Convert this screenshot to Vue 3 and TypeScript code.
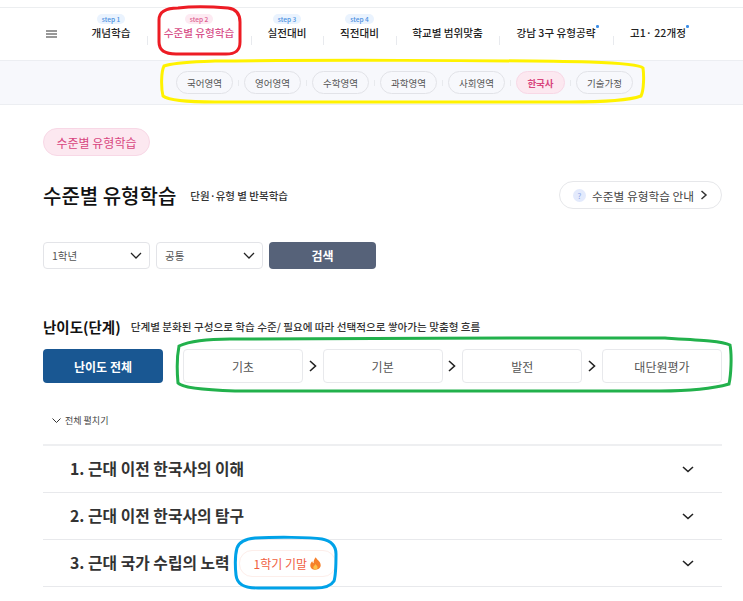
<script setup lang="ts">
interface NavItem { label: string; step?: string; active?: boolean; dot?: boolean; width: number }
const navItems: NavItem[] = [
  { label: '개념학습', step: 'step 1', width: 72 },
  { label: '수준별 유형학습', step: 'step 2', active: true, width: 104 },
  { label: '실전대비', step: 'step 3', width: 72 },
  { label: '직전대비', step: 'step 4', width: 73 },
  { label: '학교별 범위맞춤', width: 103 },
  { label: '강남 3구 유형공략', dot: true, width: 114 },
  { label: '고1· 22개정', dot: true, width: 90 }
]
const subjects = ['국어영역', '영어영역', '수학영역', '과학영역', '사회영역', '한국사', '기술가정']
const steps = ['기초', '기본', '발전', '대단원평가']
const chapters = [
  { title: '1. 근대 이전 한국사의 이해' },
  { title: '2. 근대 이전 한국사의 탐구' },
  { title: '3. 근대 국가 수립의 노력', tag: '1학기 기말' }
]
</script>

<template>
  <div class="page">
    <header class="topnav">
      <svg class="menu" width="11" height="8" viewBox="0 0 11 8"><path d="M0 1h11M0 4h11M0 7h11" stroke="#333" stroke-width="1.2" fill="none" /></svg>
      <a v-for="item in navItems" :key="item.label" class="nav-item" :class="{ active: item.active }" :style="{ width: item.width + 'px' }">
        <span v-if="item.step" class="step">{{ item.step }}</span>
        <span class="nav-label">{{ item.label }}<i v-if="item.dot" class="dot"></i></span>
      </a>
    </header>

    <nav class="subnav">
      <span v-for="s in subjects" :key="s" class="pill" :class="{ on: s === '한국사' }">{{ s }}</span>
    </nav>

    <main class="content">
      <span class="badge">수준별 유형학습</span>

      <div class="title-row">
        <h1>수준별 유형학습</h1>
        <span class="title-sub">단원·유형 별 반복학습</span>
        <button class="guide">
          <span class="q">?</span>
          수준별 유형학습 안내
          <svg width="8" height="10" viewBox="0 0 8 10"><path d="M1.5 1l4.5 4-4.5 4" stroke="#333" stroke-width="1.5" fill="none" /></svg>
        </button>
      </div>

      <div class="filters">
        <div class="select">1학년<svg width="12" height="7" viewBox="0 0 12 7"><path d="M1 1l5 5 5-5" stroke="#222" stroke-width="1.3" fill="none" /></svg></div>
        <div class="select">공통<svg width="12" height="7" viewBox="0 0 12 7"><path d="M1 1l5 5 5-5" stroke="#222" stroke-width="1.3" fill="none" /></svg></div>
        <button class="search">검색</button>
      </div>

      <div class="level-head">
        <h2>난이도(단계)</h2>
        <span>단계별 분화된 구성으로 학습 수준/ 필요에 따라 선택적으로 쌓아가는 맞춤형 흐름</span>
      </div>

      <div class="levels">
        <button class="all">난이도 전체</button>
        <div class="steps">
          <template v-for="(s, i) in steps" :key="s">
            <svg v-if="i > 0" class="arrow" width="8" height="12" viewBox="0 0 8 12"><path d="M1 1l5.5 5-5.5 5" stroke="#222" stroke-width="1.6" fill="none" /></svg>
            <div class="stepbox">{{ s }}</div>
          </template>
        </div>
      </div>

      <div class="expand">
        <svg width="9" height="5" viewBox="0 0 9 5"><path d="M.5.5l4 4 4-4" stroke="#333" stroke-width="1" fill="none" /></svg>
        전체 펼치기
      </div>

      <ul class="chapters">
        <li v-for="c in chapters" :key="c.title">
          <span class="ch-title">{{ c.title }}</span>
          <span v-if="c.tag" class="tag">{{ c.tag }}
            <svg width="11" height="13" viewBox="0 0 11 13"><path d="M5.8.3c.5 2.2 4.9 3.9 4.9 8 0 2.7-2.3 4.4-5.2 4.4S.3 11 .3 8.4c0-2 1-3.2 1.9-4.1.2 1 .7 1.7 1.4 2C3.5 4 4.3 1.8 5.8.3z" fill="#f6802b" /><path d="M5.5 7c.4 1 2.1 1.7 2.1 3.4 0 1.2-1 2.1-2.2 2.1s-2.1-.9-2.1-2c0-1.4 1.700-2 2.200-3.500z" fill="#fcc04a" /></svg>
          </span>
          <svg class="ch-arrow" width="12" height="7" viewBox="0 0 12 7"><path d="M1 1l5 4.5L11 1" stroke="#222" stroke-width="1.6" fill="none" /></svg>
        </li>
      </ul>
    </main>

    <svg class="marks" width="743" height="601" viewBox="0 0 743 601">
      <path d="M178 8 C195 6 215 7 228 8 C236 9 240 14 240 22 L240 42 C240 50 236 54 226 54 L176 54 C165 54 159 50 159 42 L159 20 C159 12 166 8 178 8Z" stroke="#ed1c24" />
      <path d="M215 61 C300 60 500 60 590 62 C620 63 640 65 643 68 C644 75 644 90 641 96 C630 100 600 102 570 102 L215 102 C190 102 168 100 163 96 C161 88 161 72 164 66 C175 62 195 62 215 61Z" stroke="#fff200" />
      <path d="M230 339 C350 338 560 338 665 338 C700 340 722 341 730 345 C732 355 731 375 729 384 C715 388 690 391 660 391 L235 391 C205 390 182 388 178 383 C177 372 177 356 179 346 C190 341 210 339 230 339Z" stroke="#22b14c" />
      <path d="M255 538 C275 537 310 537 322 539 C332 541 336 546 336 554 C336 565 336 575 334 581 C331 586 325 588 315 588 L258 588 C245 588 237 585 236 575 C235 565 235 555 237 548 C239 542 245 539 255 538Z" stroke="#00a2e8" />
    </svg>
  </div>
</template>

<style>
body { background: #fff; }
</style>

<style scoped>
.page {
  position: relative;
  width: 743px;
  height: 601px;
  overflow: hidden;
  background: #fff;
  font-family: "Noto Sans CJK KR", "Noto Sans", sans-serif;
  color: #222;
}
.topnav {
  display: flex;
  align-items: stretch;
  height: 52px;
  margin-top: 7px;
  padding-left: 46px;
  border-top: 1px solid #eceef0;
  border-bottom: 1px solid #eceef2;
  box-sizing: content-box;
}
.menu { align-self: center; margin-right: 18px; }
.nav-item {
  position: relative;
  display: flex;
  flex-direction: column;
  align-items: center;
  flex: none;
}
.nav-item + .nav-item::before {
  content: "";
  position: absolute;
  left: 0;
  top: 28px;
  width: 1px;
  height: 9px;
  background: #e8eaee;
}
.step {
  position: absolute;
  top: 6px;
  padding: 0 5px;
  height: 10px;
  line-height: 10px;
  font-size: 6.5px;
  font-weight: 500;
  border-radius: 5px;
  background: #eaf3fe;
  color: #4a8fe0;
}
.nav-label {
  position: relative;
  margin-top: 16px;
  font-size: 10.6px;
  line-height: 18px;
  font-weight: 500;
  white-space: nowrap;
  color: #222;
}
.active .step { background: #fdeaf2; color: #dc5c8f; }
.active .nav-label { color: #d8528a; }
.dot {
  position: absolute;
  top: 1px;
  right: -3px;
  width: 2.5px;
  height: 2.5px;
  border-radius: 50%;
  background: #3b8ee8;
}
.subnav {
  display: flex;
  align-items: center;
  gap: 11px;
  height: 43px;
  padding-left: 176px;
  background: #f7f8fc;
  border-bottom: 1px solid #eceef2;
}
.pill {
  position: relative;
  display: flex;
  align-items: center;
  justify-content: center;
  width: 57px;
  height: 23px;
  box-sizing: border-box;
  border: 1px solid #e2e3e8;
  border-radius: 12px;
  font-size: 9.5px;
  color: #555;
}
.pill + .pill::before {
  content: "";
  position: absolute;
  left: -7px;
  top: 8px;
  width: 1px;
  height: 6px;
  background: #e8eaee;
}
.pill.on {
  width: 49px;
  background: #fce8f0;
  border-color: #f8d8e6;
  color: #d8457e;
  font-weight: 700;
}
.content { padding: 23px 21px 0 43px; }
.badge {
  display: flex;
  align-items: center;
  justify-content: center;
  width: 107px;
  height: 28px;
  box-sizing: border-box;
  background: #fce8f0;
  border: 1px solid #f8d8e6;
  border-radius: 14px;
  font-size: 12px;
  color: #d8457e;
}
.title-row {
  display: flex;
  align-items: center;
  height: 28px;
  margin-top: 25px;
}
h1 {
  margin: 0;
  font-size: 20px;
  font-weight: 500;
  color: #111;
  white-space: nowrap;
}
.title-sub {
  margin-left: 14px;
  font-size: 10.5px;
  font-weight: 500;
  color: #333;
  white-space: nowrap;
}
.guide {
  display: flex;
  align-items: center;
  gap: 6px;
  margin-left: auto;
  width: 163px;
  height: 28px;
  padding: 0 0 0 13px;
  box-sizing: border-box;
  background: #fff;
  border: 1px solid #e6e7ea;
  border-radius: 14px;
  font-family: inherit;
  font-size: 11.7px;
  color: #444;
  white-space: nowrap;
}
.q {
  display: flex;
  align-items: center;
  justify-content: center;
  width: 13px;
  height: 13px;
  border-radius: 50%;
  background: #e3eafc;
  color: #8fa8e8;
  font-size: 8px;
}
.filters {
  display: flex;
  gap: 6px;
  height: 27px;
  margin-top: 33px;
}
.select {
  display: flex;
  align-items: center;
  justify-content: space-between;
  width: 107px;
  padding: 0 7px 0 8px;
  box-sizing: border-box;
  border: 1px solid #e3e4e8;
  border-radius: 4px;
  font-size: 10.5px;
  color: #555;
}
.search {
  width: 107px;
  background: #566279;
  border: 0;
  border-radius: 4px;
  font-family: inherit;
  font-size: 12px;
  font-weight: 700;
  color: #fff;
}
.level-head {
  display: flex;
  align-items: center;
  gap: 10px;
  height: 20px;
  margin-top: 47px;
}
h2 {
  margin: 0;
  font-size: 14.5px;
  font-weight: 700;
  color: #111;
  white-space: nowrap;
}
.level-head span {
  font-size: 10.6px;
  font-weight: 500;
  color: #333;
  white-space: nowrap;
}
.levels {
  display: flex;
  height: 34px;
  margin-top: 13px;
}
.all {
  width: 120px;
  margin-right: 20px;
  background: #195792;
  border: 0;
  border-radius: 4px;
  font-family: inherit;
  font-size: 12px;
  font-weight: 700;
  color: #fff;
}
.steps {
  display: flex;
  align-items: center;
  flex: 1;
  justify-content: space-between;
}
.stepbox {
  display: flex;
  align-items: center;
  justify-content: center;
  width: 120px;
  height: 34px;
  box-sizing: border-box;
  border: 1px solid #e8e9ec;
  border-radius: 4px;
  font-size: 12px;
  color: #555;
}
.arrow { flex: none; }
.expand {
  display: flex;
  align-items: center;
  gap: 4px;
  height: 14px;
  margin-top: 30px;
  padding-left: 9px;
  font-size: 9px;
  color: #444;
}
.chapters {
  list-style: none;
  margin: 17px 0 0;
  padding: 0;
  border-top: 2px solid #eeeff1;
}
.chapters li {
  display: flex;
  align-items: center;
  height: 46px;
  padding-left: 27px;
  border-bottom: 1px solid #e8e9ec;
}
.ch-title {
  margin-bottom: 2px;
  font-size: 15.8px;
  font-weight: 700;
  color: #333;
  white-space: nowrap;
}
.tag {
  display: flex;
  align-items: center;
  gap: 3px;
  height: 25px;
  margin-left: 9px;
  padding: 0 14px;
  border: 1px solid #fdeeea;
  border-radius: 13px;
  font-size: 12px;
  color: #f0603f;
  white-space: nowrap;
}
.ch-arrow { margin-left: auto; margin-right: 28px; }
.marks {
  position: absolute;
  left: 0;
  top: 0;
  pointer-events: none;
}
.marks path { fill: none; stroke-width: 3; }
</style>
